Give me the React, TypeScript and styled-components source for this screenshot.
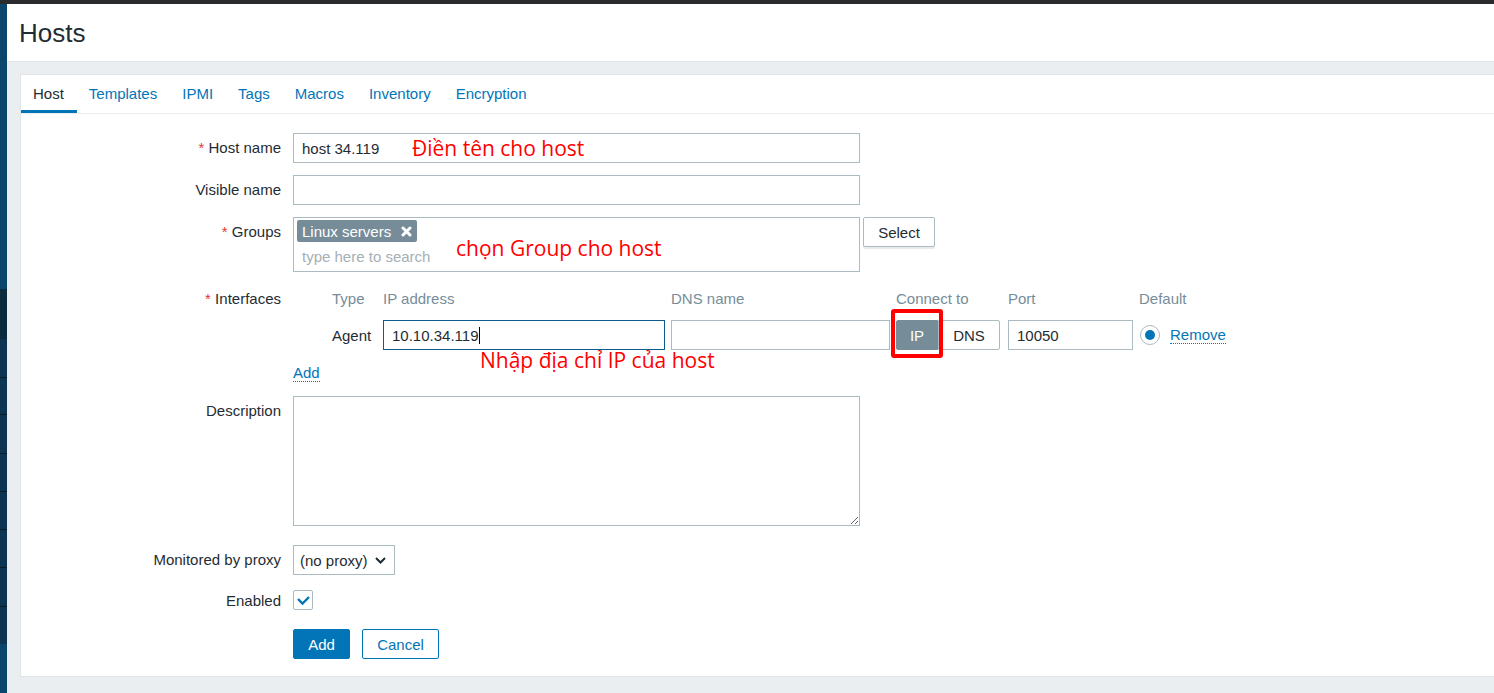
import React from "react";
import styled, { createGlobalStyle } from "styled-components";

const GlobalStyle = createGlobalStyle`
  html, body { margin: 0; padding: 0; }
  body {
    font-family: "Liberation Sans", Arial, sans-serif;
    background: #ebeef0;
    color: #1f2c33;
  }
  * { box-sizing: border-box; }
`;

const Page = styled.div`
  width: 1494px;
  height: 693px;
  display: flex;
  flex-direction: column;
  overflow: hidden;
  background: #ebeef0;
`;

const TopStrip = styled.div`
  height: 4px;
  flex: none;
  background: #2a2b2d;
`;

const Body = styled.div`
  flex: 1;
  display: flex;
  min-height: 0;
`;

const Sidebar = styled.nav`
  width: 7px;
  flex: none;
  display: flex;
  flex-direction: column;
  background: #0a466b;
`;

const SideBlock = styled.div<{ $h: number; $bg: string; $sep?: boolean }>`
  flex: none;
  height: ${(p) => p.$h}px;
  background: ${(p) => p.$bg};
  border-top: ${(p) => (p.$sep ? "1px solid #071b28" : "none")};
`;

const Main = styled.div`
  flex: 1;
  display: flex;
  flex-direction: column;
  min-width: 0;
`;

const Header = styled.header`
  height: 58px;
  flex: none;
  display: flex;
  align-items: center;
  padding: 1px 0 0 12px;
  background: #ffffff;
  border-bottom: 1px solid #dfe4e7;
`;

const Title = styled.h1`
  margin: 0;
  font-size: 26px;
  font-weight: normal;
  color: #1f2c33;
`;

const Content = styled.div`
  flex: 1;
  padding: 12px 0 0 13px;
`;

const Card = styled.section`
  height: 603px;
  background: #ffffff;
  border: 1px solid #dfe4e7;
  border-right: none;
  display: flex;
  flex-direction: column;
`;

const TabBar = styled.div`
  height: 39px;
  flex: none;
  display: flex;
  border-bottom: 1px solid #ebeef0;
`;

const Tab = styled.div<{ $active?: boolean }>`
  display: flex;
  align-items: center;
  padding: 0 13px 2px 12px;
  font-size: 15px;
  color: ${(p) => (p.$active ? "#1f2c33" : "#0275b8")};
  box-shadow: ${(p) => (p.$active ? "inset 0 -3px 0 #0275b8" : "none")};
`;

const Form = styled.div`
  padding-top: 19px;
  display: flex;
  flex-direction: column;
`;

const Row = styled.div<{ $mt: number }>`
  display: grid;
  grid-template-columns: 260px 1fr;
  column-gap: 12px;
  margin-top: ${(p) => p.$mt}px;
`;

const Label = styled.div`
  text-align: right;
  font-size: 15px;
  line-height: 30px;
  white-space: nowrap;
  color: #1f2c33;
`;

const Star = styled.span`
  color: #e33734;
`;

const Field = styled.div`
  position: relative;
  display: flex;
  align-items: flex-start;
`;

const Input = styled.input<{ $w: number }>`
  width: ${(p) => p.$w}px;
  height: 30px;
  border: 1px solid #acbbc2;
  border-radius: 0;
  padding: 0 8px;
  font-family: "Liberation Sans", Arial, sans-serif;
  font-size: 15px;
  color: #1f2c33;
  background: #ffffff;
  outline: none;
`;

const FocusedInput = styled.div<{ $w: number }>`
  width: ${(p) => p.$w}px;
  height: 30px;
  border: 1px solid #0e5c8c;
  padding: 0 8px;
  display: flex;
  align-items: center;
  font-size: 15px;
  color: #1f2c33;
  background: #ffffff;
`;

const Caret = styled.span`
  display: inline-block;
  width: 1px;
  height: 17px;
  background: #000000;
  margin-left: 1px;
`;

const Annotation = styled.span<{ $left: number; $top: number }>`
  position: absolute;
  left: ${(p) => p.$left}px;
  top: ${(p) => p.$top}px;
  line-height: 30px;
  font-family: "Open Sans", "Noto Sans", sans-serif;
  font-size: 21px;
  color: #ff0000;
  white-space: nowrap;
  pointer-events: none;
`;

const MultiSelect = styled.div`
  position: relative;
  width: 567px;
  height: 55px;
  border: 1px solid #acbbc2;
  padding: 2px 3px;
  display: flex;
  flex-direction: column;
  align-items: flex-start;
`;

const Chip = styled.span`
  display: inline-flex;
  align-items: center;
  height: 23px;
  padding: 0 5px;
  gap: 10px;
  border-radius: 2px;
  background: #768d99;
  color: #ffffff;
  font-size: 15px;
`;

const Placeholder = styled.span`
  margin-top: 3px;
  padding-left: 5px;
  line-height: 24px;
  font-size: 15px;
  color: #a4b0b6;
`;

const SelectButton = styled.button`
  margin-left: 3px;
  width: 72px;
  height: 30px;
  border: 1px solid #acbbc2;
  border-radius: 2px;
  background: #ffffff;
  box-shadow: 0 2px 0 #e6eaec;
  font-family: "Liberation Sans", Arial, sans-serif;
  font-size: 15px;
  color: #1f2c33;
  padding: 0;
`;

const IfaceGrid = styled.div`
  display: grid;
  grid-template-columns: 33px 45px 282px 219px 106px 125px 25px auto;
  column-gap: 6px;
  align-items: center;
`;

const IfaceHead = styled.div`
  height: 30px;
  line-height: 30px;
  font-size: 15px;
  color: #768d99;
  white-space: nowrap;
`;

const IfaceRow = styled(IfaceGrid)`
  margin-top: 6px;
`;

const Cell = styled.div`
  position: relative;
  font-size: 15px;
  color: #1f2c33;
  display: flex;
  align-items: center;
`;

const Toggle = styled.div`
  position: relative;
  display: flex;
  height: 30px;
`;

const ToggleOption = styled.div<{ $on?: boolean; $w: number }>`
  width: ${(p) => p.$w}px;
  height: 30px;
  display: flex;
  align-items: center;
  justify-content: center;
  font-size: 15px;
  color: ${(p) => (p.$on ? "#ffffff" : "#1f2c33")};
  background: ${(p) => (p.$on ? "#768d99" : "#ffffff")};
  border: 1px solid ${(p) => (p.$on ? "#768d99" : "#acbbc2")};
  border-radius: ${(p) => (p.$on ? "2px 0 0 2px" : "0 2px 2px 0")};
`;

const Highlight = styled.div`
  position: absolute;
  left: -5px;
  top: -11px;
  width: 52px;
  height: 49px;
  border: 4px solid #ff0000;
  border-radius: 3px;
  pointer-events: none;
`;

const Radio = styled.span`
  margin-left: 1px;
  width: 20px;
  height: 20px;
  border-radius: 50%;
  border: 1px solid #acbbc2;
  display: flex;
  align-items: center;
  justify-content: center;
  &::after {
    content: "";
    width: 10px;
    height: 10px;
    border-radius: 50%;
    background: #0275b8;
  }
`;

const DottedLink = styled.a`
  font-size: 15px;
  color: #0275b8;
  text-decoration: none;
  border-bottom: 1px dotted #0275b8;
  line-height: 17px;
`;

const AddLinkRow = styled.div`
  margin-top: 12px;
  height: 22px;
  display: flex;
  align-items: center;
`;

const TextArea = styled.textarea`
  display: block;
  width: 567px;
  height: 130px;
  border: 1px solid #acbbc2;
  border-radius: 0;
  resize: both;
  font-family: "Liberation Sans", Arial, sans-serif;
  font-size: 15px;
  outline: none;
`;

const SelectBox = styled.div`
  width: 102px;
  height: 30px;
  border: 1px solid #acbbc2;
  display: flex;
  align-items: center;
  justify-content: space-between;
  padding: 0 8px 0 6px;
  font-size: 15px;
  color: #1f2c33;
`;

const CheckBox = styled.span`
  margin-top: 4px;
  width: 20px;
  height: 20px;
  border: 1px solid #acbbc2;
  border-radius: 2px;
  display: flex;
  align-items: center;
  justify-content: center;
`;

const Buttons = styled.div`
  display: flex;
  gap: 12px;
`;

const Button = styled.button<{ $primary?: boolean; $w: number }>`
  width: ${(p) => p.$w}px;
  height: 30px;
  padding: 0;
  border: 1px solid #0275b8;
  border-radius: 2px;
  background: ${(p) => (p.$primary ? "#0275b8" : "#ffffff")};
  color: ${(p) => (p.$primary ? "#ffffff" : "#0275b8")};
  font-family: "Liberation Sans", Arial, sans-serif;
  font-size: 15px;
`;

const tabs = ["Host", "Templates", "IPMI", "Tags", "Macros", "Inventory", "Encryption"];

const sideSegments = [38, 37, 39, 38, 38, 38, 39, 38];

export default function App() {
  return (
    <Page>
      <GlobalStyle />
      <TopStrip />
      <Body>
        <Sidebar>
          <SideBlock $h={285} $bg="#0a466b" />
          <SideBlock $h={50} $bg="#0a2a3e" />
          {sideSegments.map((h, i) => (
            <SideBlock key={i} $h={h} $bg="#0d3551" $sep={i > 0} />
          ))}
          <SideBlock $h={60} $bg="#0a466b" />
        </Sidebar>
        <Main>
          <Header>
            <Title>Hosts</Title>
          </Header>
          <Content>
            <Card>
              <TabBar>
                {tabs.map((t, i) => (
                  <Tab key={t} $active={i === 0}>
                    {t}
                  </Tab>
                ))}
              </TabBar>
              <Form>
                <Row $mt={0}>
                  <Label>
                    <Star>*</Star> Host name
                  </Label>
                  <Field>
                    <Input $w={567} defaultValue="host 34.119" readOnly />
                    <Annotation $left={119} $top={0}>
                      Điền tên cho host
                    </Annotation>
                  </Field>
                </Row>
                <Row $mt={12}>
                  <Label>Visible name</Label>
                  <Field>
                    <Input $w={567} defaultValue="" readOnly />
                  </Field>
                </Row>
                <Row $mt={12}>
                  <Label>
                    <Star>*</Star> Groups
                  </Label>
                  <Field>
                    <MultiSelect>
                      <Chip>
                        Linux servers
                        <svg width="11" height="11" viewBox="0 0 11 11">
                          <path
                            d="M2 2 L9 9 M9 2 L2 9"
                            stroke="#ffffff"
                            strokeWidth="3"
                            strokeLinecap="round"
                          />
                        </svg>
                      </Chip>
                      <Placeholder>type here to search</Placeholder>
                      <Annotation $left={162} $top={15}>
                        chọn Group cho host
                      </Annotation>
                    </MultiSelect>
                    <SelectButton>Select</SelectButton>
                  </Field>
                </Row>
                <Row $mt={12}>
                  <Label>
                    <Star>*</Star> Interfaces
                  </Label>
                  <div>
                    <IfaceGrid>
                      <IfaceHead />
                      <IfaceHead>Type</IfaceHead>
                      <IfaceHead>IP address</IfaceHead>
                      <IfaceHead>DNS name</IfaceHead>
                      <IfaceHead>Connect to</IfaceHead>
                      <IfaceHead>Port</IfaceHead>
                      <IfaceHead>Default</IfaceHead>
                      <IfaceHead />
                    </IfaceGrid>
                    <IfaceRow>
                      <Cell />
                      <Cell>Agent</Cell>
                      <Cell>
                        <FocusedInput $w={282}>
                          10.10.34.119
                          <Caret />
                        </FocusedInput>
                        <Annotation $left={97} $top={25}>
                          Nhập địa chỉ IP của host
                        </Annotation>
                      </Cell>
                      <Cell>
                        <Input $w={219} defaultValue="" readOnly />
                      </Cell>
                      <Cell>
                        <Toggle>
                          <ToggleOption $on $w={42}>
                            IP
                          </ToggleOption>
                          <ToggleOption $w={62}>DNS</ToggleOption>
                          <Highlight />
                        </Toggle>
                      </Cell>
                      <Cell>
                        <Input $w={125} defaultValue="10050" readOnly />
                      </Cell>
                      <Cell>
                        <Radio />
                      </Cell>
                      <Cell>
                        <DottedLink>Remove</DottedLink>
                      </Cell>
                    </IfaceRow>
                    <AddLinkRow>
                      <DottedLink>Add</DottedLink>
                    </AddLinkRow>
                  </div>
                </Row>
                <Row $mt={12}>
                  <Label>Description</Label>
                  <Field>
                    <TextArea readOnly />
                  </Field>
                </Row>
                <Row $mt={19}>
                  <Label>Monitored by proxy</Label>
                  <Field>
                    <SelectBox>
                      (no proxy)
                      <svg width="11" height="7" viewBox="0 0 11 7">
                        <path
                          d="M1 1 L5.5 5.5 L10 1"
                          fill="none"
                          stroke="#1f2c33"
                          strokeWidth="2"
                        />
                      </svg>
                    </SelectBox>
                  </Field>
                </Row>
                <Row $mt={11}>
                  <Label>Enabled</Label>
                  <Field>
                    <CheckBox>
                      <svg width="18" height="18" viewBox="0 0 18 18">
                        <path
                          d="M4 8 L8.5 12.5 L15 6"
                          fill="none"
                          stroke="#0275b8"
                          strokeWidth="2.4"
                        />
                      </svg>
                    </CheckBox>
                  </Field>
                </Row>
                <Row $mt={13}>
                  <div />
                  <Buttons>
                    <Button $primary $w={57}>
                      Add
                    </Button>
                    <Button $w={77}>Cancel</Button>
                  </Buttons>
                </Row>
              </Form>
            </Card>
          </Content>
        </Main>
      </Body>
    </Page>
  );
}
